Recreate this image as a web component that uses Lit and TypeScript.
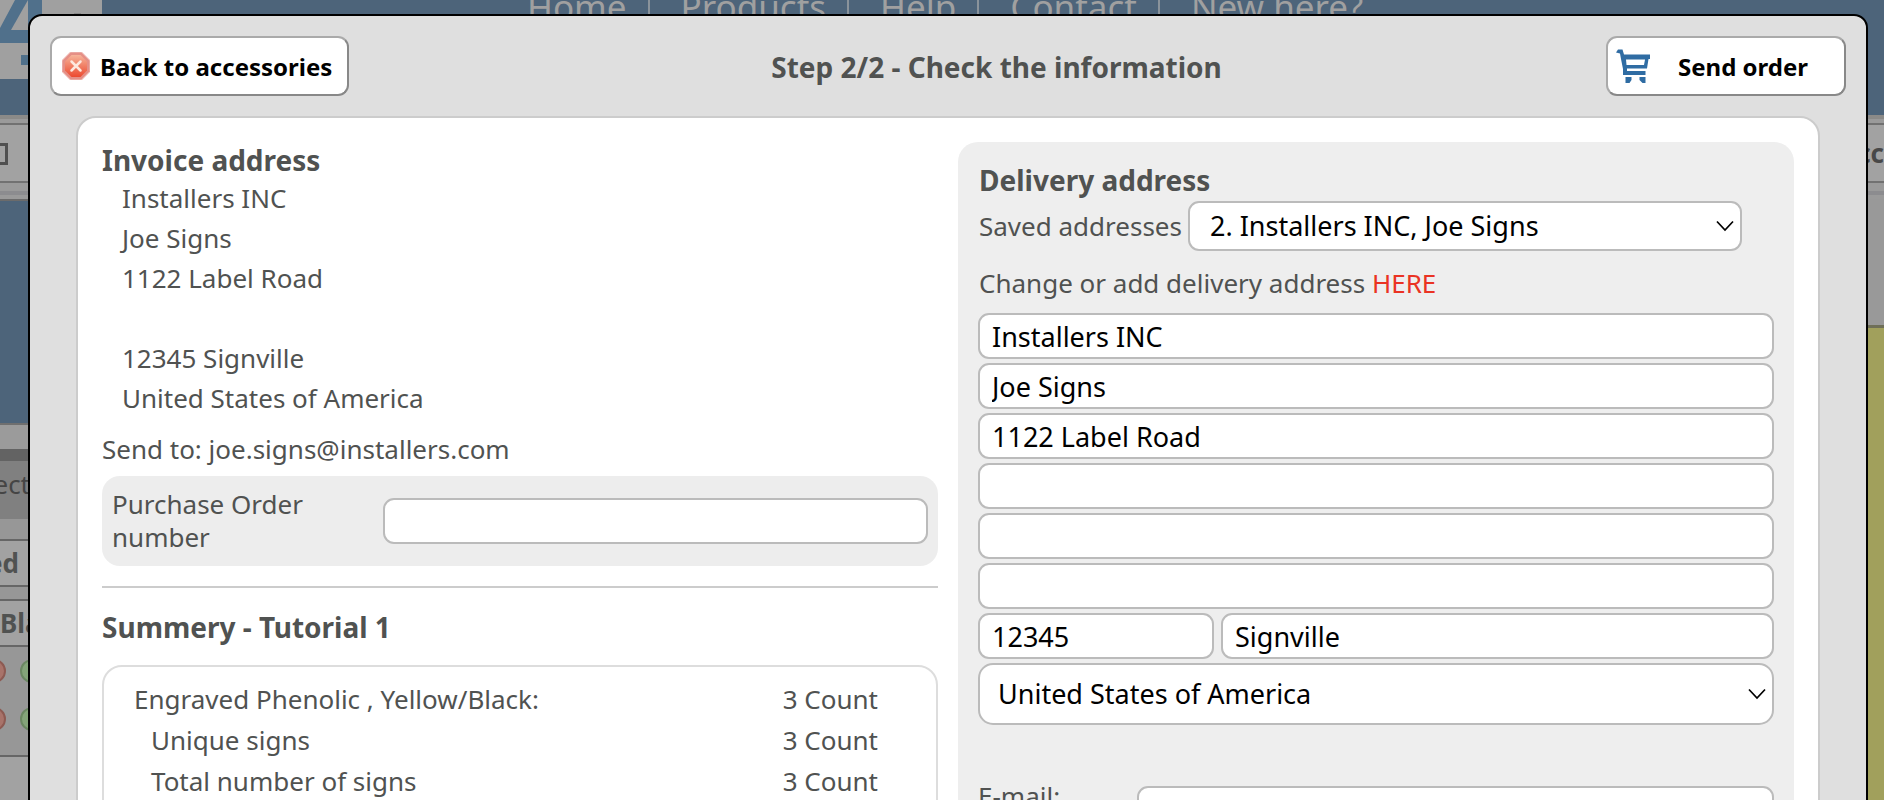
import { LitElement, html, css } from "lit";
import { customElement } from "lit/decorators.js";

@customElement("app-root")
class AppRoot extends LitElement {
  static styles = css`
    :host { display: block; position: relative; height: 100vh; overflow: hidden;
      font: 26px/40px Tahoma, "Noto Sans", sans-serif; color: #505251; background: #979797; }
    * { box-sizing: border-box; }
    h1, h2, p, dl, dd, dt, hr { margin: 0; }
    h1, h2 { font-size: 28px; font-weight: 700; line-height: 36px; }
    a { text-decoration: none; color: inherit; }

    .page { display: flex; flex-direction: column; height: 100%; overflow: hidden; }
    .masthead { display: flex; flex: none; height: 115px; background: #4d647a; }
    .logo { width: 102px; height: 79px; flex: none; }
    .nav { display: flex; align-items: flex-start; margin: -17px 0 0 425px; color: #a0a0a0; font-size: 35px; line-height: 48px; }
    .nav a + a { margin-left: 21px; padding-left: 31px; border-left: 2px solid #8a939b; }
    .toolbar { display: flex; flex: none; justify-content: space-between; height: 84px; padding: 4px 0;
      border-top: 4px solid #8b8a88; background: #9a9a9a; box-shadow: inset 0 -4px #9a9a9a, inset 0 -8px #8c8c8f; }
    .tab { width: 100px; height: 60px; border: solid #717171; border-width: 2px 0; background: #a2a2a2; font-weight: 700; line-height: 56px; }
    .tab.end { width: 24px; overflow: hidden; display: flex; justify-content: flex-end; color: #484848; }
    .glyph { display: block; width: 8px; height: 22px; margin: 18px 0; border: solid #505050; border-width: 3px 3px 3px 0; }
    .work { display: flex; flex: 1; justify-content: space-between; }
    .side { width: 100px; }
    .blue { height: 224px; background: #4d647a; border-top: 2px solid #6b6b6b; }
    .band { height: 38px; border-top: 2px solid #6f6f6f; border-bottom: 12px solid #636363; background: #9b9b9b; }
    .cut { display: flex; justify-content: flex-end; width: 30px; white-space: nowrap; overflow: hidden; }
    .pick { height: 58px; margin-bottom: 20px; background: #808080; color: #454545; line-height: 46px; }
    .item { height: 48px; margin-bottom: 12px; border: solid #666; border-width: 2px 0; background: #a2a2a2; font-weight: 700; line-height: 44px; }
    .item.last { margin: 0; }
    .item .cut.gap { width: 19px; }
    .item .cut.start { justify-content: flex-start; }
    .dots { display: block; width: 30px; height: 108px; }
    .rest { height: 60px; border-top: 2px solid #666; background: #a2a2a2; }
    .canvas { width: 100px; background: #a1a05c; border-top: 126px solid #999; box-shadow: inset 0 3px #6f6f58; }

    .dialog { position: absolute; inset: 14px 16px auto 28px; min-height: 100%; padding: 20px;
      border: 2px solid #000; border-radius: 14px; background: #dfdfdf; }
    .top { display: flex; align-items: center; }
    .top h1 { flex: 1; padding: 2px 0 0 38px; text-align: center; }
    .btn { display: flex; align-items: center; height: 60px; padding: 0 10px; border: 2px solid; border-color: #aaa #888 #888 #aaa;
      border-radius: 11px; background: #fff; color: #000; font: 700 24px/32px Tahoma, "Noto Sans", sans-serif; white-space: nowrap; }
    .btn .label { padding-top: 2px; }
    .back { width: 299px; gap: 10px; }
    .send { width: 240px; gap: 28px; padding: 0 8px; }
    .ico { flex: none; display: block; }

    .panel { display: grid; grid-template-columns: minmax(0, 1fr) minmax(0, 1fr); gap: 20px; margin: 20px 26px 0; padding: 24px 24px 0;
      border: 2px solid #ccc; border-radius: 20px; background: #fff; }
    .address { padding-left: 20px; font-style: normal; }
    .address p { height: 40px; }
    .mail { margin-top: 11px; }
    .po { display: flex; align-items: center; justify-content: space-between; height: 90px; margin: 7px 0 20px; padding: 0 10px;
      border-radius: 18px; background: #ededed; line-height: 33px; }
    .po label { width: 220px; }
    .po input { width: 545px; }
    hr { border: 0; border-top: 2px solid #ccc; }
    .summary-title { margin: 21px 0 20px; }
    .summary { padding: 12px 58px 200px 30px; border: 2px solid #ddd; border-radius: 20px; }
    .summary div { display: flex; justify-content: space-between; line-height: 41px; }
    .summary div + div dt { padding-left: 17px; }

    .delivery { padding: 20px; border-radius: 20px; background: #eee; }
    .delivery > h2, .line, .saved { padding-left: 1px; }
    .saved { display: flex; align-items: center; gap: 6px; margin-right: 32px; height: 50px; white-space: nowrap; }
    .delivery > h2 { height: 39px; }
    .line { margin: 12px 0 10px; }
    .here { color: #ea3323; }
    input, select { width: 100%; min-width: 0; height: 46px; margin: 0; padding: 0 12px; border: 2px solid #bbb; border-radius: 11px; outline: 0;
      background: #fff; color: #000; font: 27px/40px Tahoma, "Noto Sans", sans-serif; }
    .fields { display: grid; gap: 4px; }
    .split { display: grid; grid-template-columns: 236px minmax(0, 1fr); gap: 7px; }
    .pickbox { display: grid; flex: 1; align-items: center; }
    .pickbox > * { grid-area: 1 / 1; }
    .pickbox svg { justify-self: end; margin-right: 8px; pointer-events: none; }
    select { appearance: none; height: 50px; padding: 0 20px; }
    .country select { height: 62px; border-radius: 15px; padding: 0 18px; }
    .email { display: flex; justify-content: space-between; margin-top: 61px; }
    .email label { line-height: 20px; }
    .email input { width: 80%; }
  `;

  private chevron() {
    return html`<svg width="18" height="12" viewBox="0 0 18 12" aria-hidden="true"><path d="M1 1.500 9 10l8-8.500" fill="none" stroke="#000" stroke-width="1.700"/></svg>`;
  }

  render() {
    const blanks = ["Address line 2", "Address line 3", "Address line 4"];
    return html`
      <div class="page">
        <header class="masthead">
          <svg class="logo" viewBox="0 0 102 79" aria-hidden="true">
            <path d="M0 0H102V79H0Z" fill="#a0a0a0"/>
            <path d="M15 0H42V65H21V55H28V43H0V28Z" fill="#50708b"/>
            <path d="M28 0V30H11Z" fill="#a0a0a0"/>
            <path d="M74 13h7v3h-7z" fill="#888"/>
          </svg>
          <nav class="nav"><a href="#">Home</a><a href="#">Products</a><a href="#">Help</a><a href="#">Contact</a><a href="#">New here?</a></nav>
        </header>
        <div class="toolbar">
          <div class="tab"><span class="glyph"></span></div>
          <div class="tab end">cc</div>
        </div>
        <div class="work">
          <div class="side">
            <div class="blue"></div>
            <div class="band"></div>
            <div class="pick"><div class="cut">ect</div></div>
            <div class="item"><div class="cut gap">ed</div></div>
            <div class="item last"><div class="cut start">Bla</div></div>
            <svg class="dots" viewBox="0 0 30 108" aria-hidden="true">
              <g fill="#a8736a" stroke="#8d5a52" stroke-width="2"><circle cx="-6" cy="24" r="11"/><circle cx="-6" cy="72" r="11"/></g>
              <g fill="#84a479" stroke="#6b8862" stroke-width="2"><circle cx="32" cy="24" r="11"/><circle cx="32" cy="72" r="11"/></g>
            </svg>
            <div class="rest"></div>
          </div>
          <div class="canvas"></div>
        </div>
      </div>

      <section class="dialog" role="dialog" aria-labelledby="title">
        <div class="top">
          <button class="btn back" type="button">
            <svg class="ico" width="28" height="28" viewBox="0 0 28 28" aria-hidden="true">
              <defs><linearGradient id="stop" x2="0" y2="1"><stop stop-color="#f6b49a"/><stop offset="1" stop-color="#ec4a30"/></linearGradient></defs>
              <path d="M8.500 0h11L28 8.500v11L19.500 28h-11L0 19.500v-11Z" fill="#e58f86" stroke="#f0c0bb"/>
              <path d="M9.500 3h9L25 9.500v9L18.500 25h-9L3 18.500v-9Z" fill="url(#stop)"/>
              <path d="m9.500 9.500 9 9m0-9-9 9" stroke="#fde8df" stroke-width="2.500" stroke-linecap="round"/>
            </svg>
            <span class="label">Back to accessories</span>
          </button>
          <h1 id="title">Step 2/2 - Check the information</h1>
          <button class="btn send" type="button">
            <svg class="ico" width="34" height="34" viewBox="0 0 34 34" aria-hidden="true">
              <path d="M0 3.500 2 .500h4.500L8 5.500H34V10H32.500L31 19.500H11V22H29.500V26H7V20L5 10 4 4.500Z" fill="#2f6ca3"/>
              <path d="M10 10.500H29L28 16H10.500Z" fill="#fff"/>
              <path d="M9.500 28h6v3l-2 3h-4zM23.500 28h6v6h-3l-3-3z" fill="#2f6ca3"/>
            </svg>
            <span class="label">Send order</span>
          </button>
        </div>

        <div class="panel">
          <div>
            <h2>Invoice address</h2>
            <address class="address">
              <p>Installers INC</p><p>Joe Signs</p><p>1122 Label Road</p><p></p><p>12345 Signville</p><p>United States of America</p>
            </address>
            <p class="mail">Send to: joe.signs@installers.com</p>
            <div class="po"><label for="po">Purchase Order number</label><input id="po" type="text"></div>
            <hr>
            <h2 class="summary-title">Summery - Tutorial 1</h2>
            <dl class="summary">
              <div><dt>Engraved Phenolic , Yellow/Black:</dt><dd>3 Count</dd></div>
              <div><dt>Unique signs</dt><dd>3 Count</dd></div>
              <div><dt>Total number of signs</dt><dd>3 Count</dd></div>
            </dl>
          </div>

          <form class="delivery">
            <h2>Delivery address</h2>
            <div class="saved">
              <label for="saved">Saved addresses</label>
              <div class="pickbox"><select id="saved"><option>2. Installers INC, Joe Signs</option></select>${this.chevron()}</div>
            </div>
            <p class="line">Change or add delivery address <a class="here" href="#">HERE</a></p>
            <div class="fields">
              <input type="text" aria-label="Company" value="Installers INC">
              <input type="text" aria-label="Name" value="Joe Signs">
              <input type="text" aria-label="Address" value="1122 Label Road">
              ${blanks.map((b) => html`<input type="text" aria-label=${b}>`)}
              <div class="split"><input type="text" aria-label="Zip code" value="12345"><input type="text" aria-label="City" value="Signville"></div>
              <div class="pickbox country"><select aria-label="Country"><option>United States of America</option></select>${this.chevron()}</div>
            </div>
            <div class="email"><label for="email">E-mail:</label><input id="email" type="email"></div>
          </form>
        </div>
      </section>
    `;
  }
}
